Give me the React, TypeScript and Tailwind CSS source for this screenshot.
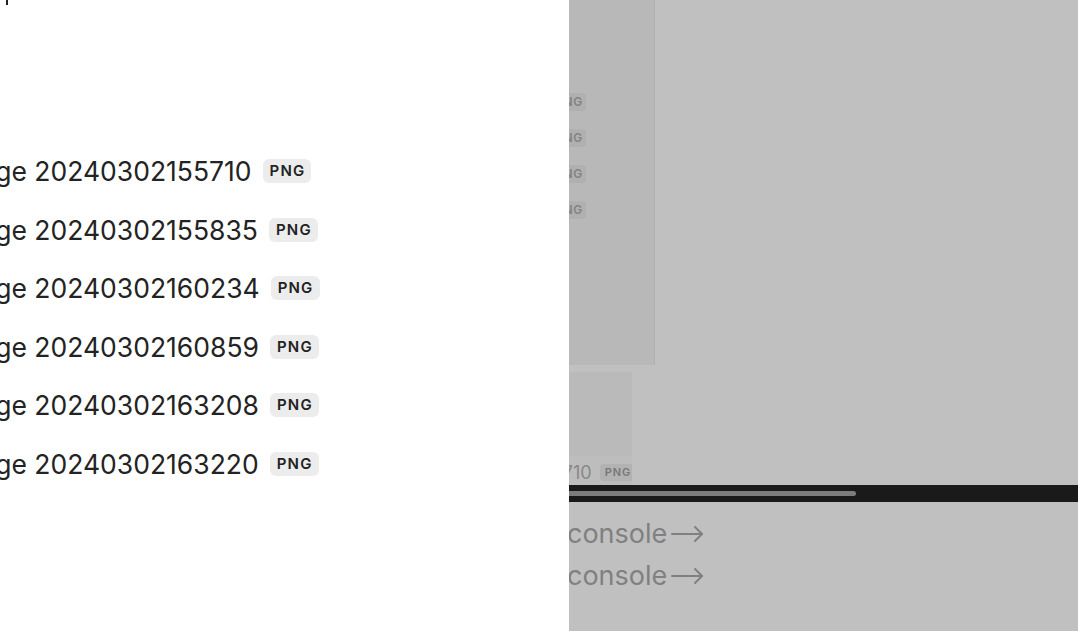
const files = [
  { name: "Image 20240302155710" },
  { name: "Image 20240302155835" },
  { name: "Image 20240302160234" },
  { name: "Image 20240302160859" },
  { name: "Image 20240302163208" },
  { name: "Image 20240302163220" },
];

const Arrow = () => (
  <svg width="33" height="18" viewBox="0 0 33 18" fill="none" stroke="#808080" strokeWidth="2" strokeLinecap="round" strokeLinejoin="round">
    <path d="M1 9h30" />
    <path d="M24 2l7 7-7 7" />
  </svg>
);

const App = () => {
  return (
    <div className="flex h-[631px] w-[1078px] overflow-hidden font-['Inter','Liberation_Sans',sans-serif]">
      {/* File list */}
      <div className="w-[569px] shrink-0 overflow-hidden bg-white">
        <div className="ml-[6px] h-[5px] w-[2px] bg-[#222]" />
        <ul className="-ml-[50px] mt-[137px] flex flex-col">
          {files.map((f) => (
            <li key={f.name} className="flex h-[58.5px] items-center gap-[11px] whitespace-nowrap">
              <span className="text-[26.5px] leading-[30px] text-[#232323]">{f.name}</span>
              <span className="flex h-[24px] items-center rounded-[6px] bg-[#ececec] pl-[7px] pr-[6px] text-[15px] font-semibold tracking-[0.08em] text-[#222]">
                PNG
              </span>
            </li>
          ))}
        </ul>
      </div>

      {/* Dimmed preview behind the overlay */}
      <div className="flex min-w-0 flex-1 flex-col overflow-hidden bg-[#c0c0c0]">
        <div className="flex h-[365px] shrink-0">
          <div className="flex w-[86px] flex-col gap-[18px] border-r border-[#b1b1b1] bg-[#b8b8b8] pt-[93px]">
            {[0, 1, 2, 3].map((i) => (
              <span key={i} className="-ml-[17px] flex h-[18px] w-[34px] items-center justify-center rounded-[4px] bg-[#b0b0b0] text-[12px] font-semibold tracking-[0.06em] text-[#838383]">
                PNG
              </span>
            ))}
          </div>
        </div>

        <div className="mt-[7px] flex h-[113px] w-[63px] shrink-0 flex-col justify-end overflow-hidden bg-[#bababa]">
          <div className="flex h-[29px] items-center justify-end gap-[8px] bg-[#bdbdbd] pt-[3px] whitespace-nowrap">
            <span className="text-[18px] text-[#888]">155710</span>
            <span className="-mr-[4px] flex h-[17px] items-center rounded-[4px] bg-[#b2b2b2] px-[5px] text-[11px] font-semibold tracking-[0.08em] text-[#777]">
              PNG
            </span>
          </div>
        </div>

        <div className="h-[17px] shrink-0 bg-[#1a1a1a] pt-[6px]">
          <div className="-ml-[10px] h-[5px] w-[297px] rounded-full bg-[#7c7c7c]" />
        </div>

        <div className="-ml-[2px] mt-[11px] flex flex-col text-[27px] leading-[42px] text-[#808080]">
          {[0, 1].map((i) => (
            <div key={i} className="flex items-center gap-[4px]">
              <span>console</span>
              <Arrow />
            </div>
          ))}
        </div>
      </div>
    </div>
  );
};

export default App;
